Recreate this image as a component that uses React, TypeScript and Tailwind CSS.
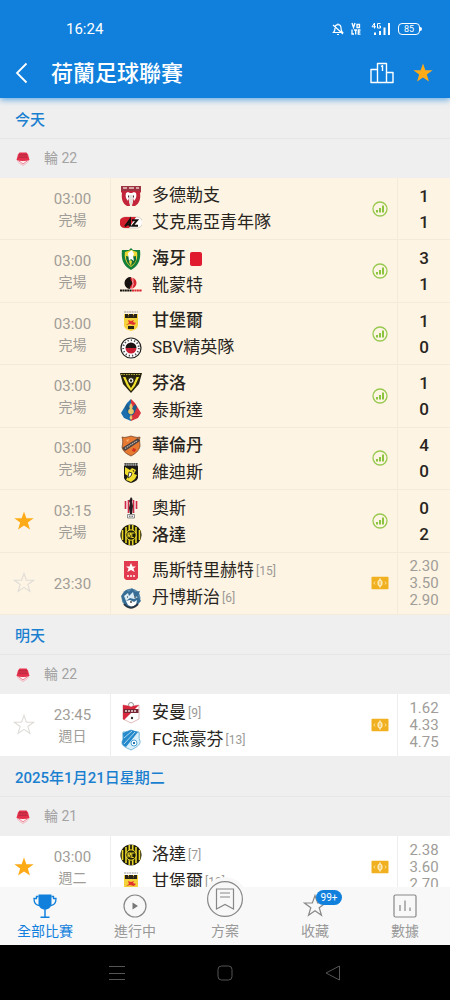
import { FunctionComponent, ReactNode, useState } from "react";
import clsx from "clsx";

type ITeam = {
  name: string;
  crest: string;
  score?: number;
  rank?: number;
  winner?: boolean;
  redCard?: boolean;
};

type IMatch = {
  id: number;
  time: string;
  status?: string;
  home: ITeam;
  away: ITeam;
  odds?: string[];
  starred?: boolean;
};

type IDay = {
  title: string;
  round: number;
  today?: boolean;
  matches: IMatch[];
};

const days: IDay[] = [
  {
    title: "今天",
    round: 22,
    today: true,
    matches: [
      {
        id: 1,
        time: "03:00",
        status: "完場",
        home: { name: "多德勒支", crest: "dordrecht", score: 1 },
        away: { name: "艾克馬亞青年隊", crest: "az", score: 1 },
      },
      {
        id: 2,
        time: "03:00",
        status: "完場",
        home: { name: "海牙", crest: "denhaag", score: 3, winner: true, redCard: true },
        away: { name: "靴蒙特", crest: "helmond", score: 1 },
      },
      {
        id: 3,
        time: "03:00",
        status: "完場",
        home: { name: "甘堡爾", crest: "cambuur", score: 1, winner: true },
        away: { name: "SBV精英隊", crest: "excelsior", score: 0 },
      },
      {
        id: 4,
        time: "03:00",
        status: "完場",
        home: { name: "芬洛", crest: "venlo", score: 1, winner: true },
        away: { name: "泰斯達", crest: "telstar", score: 0 },
      },
      {
        id: 5,
        time: "03:00",
        status: "完場",
        home: { name: "華倫丹", crest: "volendam", score: 4, winner: true },
        away: { name: "維迪斯", crest: "vitesse", score: 0 },
      },
      {
        id: 6,
        time: "03:15",
        status: "完場",
        starred: true,
        home: { name: "奧斯", crest: "oss", score: 0 },
        away: { name: "洛達", crest: "roda", score: 2, winner: true },
      },
      {
        id: 7,
        time: "23:30",
        starred: false,
        home: { name: "馬斯特里赫特", crest: "mvv", rank: 15 },
        away: { name: "丹博斯治", crest: "denbosch", rank: 6 },
        odds: ["2.30", "3.50", "2.90"],
      },
    ],
  },
  {
    title: "明天",
    round: 22,
    matches: [
      {
        id: 8,
        time: "23:45",
        status: "週日",
        starred: false,
        home: { name: "安曼", crest: "emmen", rank: 9 },
        away: { name: "FC燕豪芬", crest: "eindhoven", rank: 13 },
        odds: ["1.62", "4.33", "4.75"],
      },
    ],
  },
  {
    title: "2025年1月21日星期二",
    round: 21,
    matches: [
      {
        id: 9,
        time: "03:00",
        status: "週二",
        starred: true,
        home: { name: "洛達", crest: "roda", rank: 7 },
        away: { name: "甘堡爾", crest: "cambuur", rank: 10 },
        odds: ["2.38", "3.60", "2.70"],
      },
    ],
  },
];

const STAR = "M12 1.5l2.600 7.400 7.900.1-6.300 4.700 2.300 7.600L12 16.800l-6.500 4.500 2.300-7.600L1.500 9l7.900-.1z";

const crests: Record<string, ReactNode> = {
  dordrecht: (
    <>
      <path d="M1 1h20v6l-1 1c1 6-1 11-5 13h-3l1-5H9l1 5H7C3 19 1 14 2 8L1 7z" fill="#c3263a" />
      <path d="M1 1h20v5H1z" fill="#9d3442" />
      <path d="M3 3h4M9 3h5M16 3h3" stroke="#e8c9c4" strokeWidth="1.6" />
      <path d="M6 8c-1 3 0 6 2 8l1-3 2 1 2-1 1 3c2-2 3-5 2-8l-2-1-2 1h-2L8 7z" fill="#fff" />
      <path d="M9 10h4v7l-2 4-2-4z" fill="#e6e1dd" />
      <path d="M8.500 10.500v2M13.500 10.500v2" stroke="#4b3035" strokeWidth="1" />
    </>
  ),
  az: (
    <>
      <path d="M5 5h12a5 5 0 0 1 0 11H5A5 5 0 0 1 5 5z" fill="#fff" stroke="#cfc8bd" strokeWidth=".8" />
      <path d="M5 5h11L9 16H5A5 5 0 0 1 5 5z" fill="#d3202e" />
      <path d="M5 14.500L10 7.500v7M7 12.500h3M12 8.300h5L12.500 13.700h5.500" stroke="#15110f" strokeWidth="2" fill="none" />
    </>
  ),
  denhaag: (
    <>
      <path d="M11 0l2 2h7c1 9-1 16-9 20C3 18 1 11 2 2h7z" fill="#13803b" />
      <path d="M5 4l6-2 6 2c1 7-1 11-6 15C6 15 4 11 5 4z" fill="#ecd734" />
      <path d="M6 8c3 1 7 1 10 0v4c-1 3-3 4-5 6-3-2-5-5-5-10z" fill="#106b34" />
      <path d="M8 5l4-3 2 4-1 2 1 5-3-2-2 2z" fill="#fff" />
      <path d="M10 12l2 1-1 5-2-4z" fill="#ecd734" />
    </>
  ),
  helmond: (
    <>
      <circle cx="11" cy="8" r="5.500" fill="#d9242e" />
      <path d="M11 2a6 6 0 0 0-1 12c-1-3 3-4 2-7-1-2-2-2-1-5z" fill="#17120f" />
      <path d="M12 3c2 2 0 4 1 5s-1 3-1 5" stroke="#fff" strokeWidth=".7" fill="none" />
      <path d="M0 15.500h12" stroke="#17120f" strokeWidth="2" strokeDasharray="2 .4" />
      <path d="M12 15.500h10" stroke="#d9242e" strokeWidth="2" strokeDasharray="2 .4" />
    </>
  ),
  cambuur: (
    <>
      <path d="M4 4h14v11c0 3-3 5-7 6-4-1-7-3-7-6z" fill="#f4d23b" />
      <path d="M4 2h14" stroke="#999" strokeWidth="1.200" strokeDasharray="2 .6" />
      <path d="M5 4h3v3h1V4h4v3h1V4h3v4H5z" fill="#2a2418" />
      <path d="M6 6h10" stroke="#2a2418" strokeWidth="1.500" />
      <path d="M8 10l3 1 3-1-1 2 3 1-2 2-4-1-4 1 3-2z" fill="#e2342c" />
      <path d="M8 16h6v3H8z" fill="#2a2418" />
    </>
  ),
  excelsior: (
    <>
      <circle cx="11" cy="11" r="10" fill="#fff" stroke="#222" strokeWidth="1.200" />
      <circle cx="11" cy="11" r="7.800" fill="none" stroke="#555" strokeWidth="1.800" strokeDasharray="1.300 2" />
      <path d="M5.500 11a5.500 5.500 0 0 1 11 0z" fill="#1c1414" />
      <path d="M5.500 11a5.500 5.500 0 0 0 11 0z" fill="#c81e34" />
    </>
  ),
  venlo: (
    <>
      <path d="M0 1h22l-3 11-8 9-8-9z" fill="#26230f" />
      <path d="M1 2.500h20" stroke="#b8ad3a" strokeWidth="1" strokeDasharray="1.500 1" />
      <path d="M3 5l4 9 4 5 4-5 4-9h-2.500l-3 7-2.500 4-2.500-4-3-7z" fill="#f0df2e" />
      <circle cx="11" cy="8.500" r="2.800" fill="#fff" stroke="#26230f" strokeWidth=".8" />
      <path d="M10.200 7.500h1.600l.6 1.500-1.400 1-1.400-1z" fill="#26230f" />
    </>
  ),
  telstar: (
    <>
      <path d="M11 0L7 4 1 14l3 5 7 3z" fill="#1b6fae" />
      <path d="M11 0l4 4 6 10-3 5-7 3z" fill="#d8333c" />
      <path d="M7 5l4 5 4-5 2 3-3 7-3 2-3-2-3-7z" fill="#1c5c8c" />
      <path d="M11 2l4 3-4 5z" fill="#d8333c" />
      <path d="M11 4c2 3 2 4 1 6h-2c-1-2-1-3 1-6zM11 15l1.500 4-1.500 2-1.500-2z" fill="#e9c86c" />
      <circle cx="11" cy="12.500" r="2.800" fill="#e9c86c" />
    </>
  ),
  volendam: (
    <>
      <path d="M2 2c3 1 5 0 9-1 4 1 6 2 9 1-1 3 0 6 0 9-1 5-5 8-9 10-4-2-8-4-9-9 1-4 1-7 0-10z" fill="#e77a30" stroke="#74482d" strokeWidth=".8" />
      <path d="M2 13L18 3l2 3L5 16z" fill="#484244" />
      <path d="M5 13.500L17.500 5.500" stroke="#c9b9a9" strokeWidth="1.200" strokeDasharray="1.400 .7" />
      <path d="M13 13l3 1-1 3-3-1z" fill="#d22d1d" />
      <path d="M6 5l3-1-1 3z" fill="#f6b273" />
    </>
  ),
  vitesse: (
    <>
      <path d="M4 1h14v15c-1 3-4 4-7 5-3-1-6-2-7-5z" fill="#1b1a17" />
      <path d="M4 2.500h14" stroke="#aaa" strokeWidth="2.400" strokeDasharray="1.500 .6" />
      <path d="M5 5l5 3 2-2 4 2-2 4 3 1-2 4-4 3-5-2 2-4-3-2z" fill="#f1dd2c" />
      <path d="M9 10l3 1-1 3-3 2zM13 8l1 2" fill="#fff" stroke="#1b1a17" strokeWidth=".8" />
    </>
  ),
  oss: (
    <>
      <path d="M5 4c3-2 9-2 12 0 2 5 0 11-6 13C5 15 3 9 5 4z" fill="#fff" />
      <path d="M5.500 4v8M8.500 3v13M13.500 3v13M16.500 4v8" stroke="#cf2c44" strokeWidth="1.700" />
      <path d="M11 0l1.500 2-.5 3 1 4-1 8h-2l-1-6 1-5-1-2z" fill="#241c1e" />
      <path d="M7.500 17.500h7v3.500h-7z" fill="#eee" stroke="#777" strokeWidth=".8" />
      <path d="M9 19.200h4" stroke="#555" strokeDasharray="1 .5" />
    </>
  ),
  roda: (
    <>
      <circle cx="11" cy="11" r="10.600" fill="#1d1b0c" />
      <path d="M2.500 6v10M6 3v16M9.300 1v20M12.700 1v20M16 3v16M19.500 6v10" stroke="#e9d829" strokeWidth="1.600" />
      <circle cx="11" cy="11" r="5.200" fill="#1d1b0c" stroke="#e9d829" strokeWidth="1" />
      <path d="M8 13.500V9h2.500v2H8.500l2 2.500M14.500 9h-2.700v4.500h2" stroke="#e9d829" strokeWidth="1.100" fill="none" />
    </>
  ),
  mvv: (
    <>
      <path d="M4 1h14v17l-2 2H6l-2-2z" fill="#e23b50" />
      <path d="M11 3l1.500 3.500H16l-2.600 2 1.300 3.500-3.700-2-3.700 2 1.300-3.500-2.600-2h3.500z" fill="#fff" />
      <path d="M7 16h8" stroke="#f7c5c9" strokeWidth="2" strokeDasharray="2 1" />
    </>
  ),
  denbosch: (
    <>
      <circle cx="11" cy="11" r="9.500" fill="#5589ad" />
      <path d="M1 9l5-6 3 2 3-4 3 4 5-1-2 5 3 5-6 6H8l-4-4z" fill="#376c94" />
      <path d="M4 9l4-3 1 3 4-4 1 4 4 1-4 2-4-1-4 3z" fill="#d9ecf6" />
      <path d="M6 14l4-1 4 2 3-2-1 5-4 2-4-2z" fill="#fff" />
      <path d="M4 17c4 5 9 5 14 0" stroke="#273542" strokeWidth="1.800" fill="none" />
      <path d="M7 10h1M14 10h2M11 14v2" stroke="#222" strokeWidth="1.200" />
    </>
  ),
  emmen: (
    <>
      <circle cx="11" cy="3" r="2.500" fill="#fff" stroke="#777" strokeWidth=".8" />
      <path d="M3 3l6 1 2 1 2-1 6-1v14l-8 4-8-4z" fill="#fff" stroke="#d8a9a9" strokeWidth=".8" />
      <path d="M3 3l6 1 2 1 2-1 6-1L4 18l-1-1z" fill="#d8283e" />
      <path d="M3.500 7h15v4h-15z" fill="#742836" />
      <path d="M5 9h12" stroke="#f0dcdc" strokeWidth="1.400" strokeDasharray="2 1" />
      <circle cx="12" cy="16" r="1.200" fill="#333" />
    </>
  ),
  eindhoven: (
    <>
      <path d="M3 3c4 0 5-1 8-2 3 1 5 2 8 2 1 3-1 5 1 9 1 4-5 7-9 9-4-2-10-4-9-8 2-4 0-6 1-10z" fill="#d9effa" stroke="#5aa7d2" strokeWidth=".8" />
      <path d="M3 4l8-3 7 2L6 18c-3-1-4-3-4-5 2-4 1-6 1-9z" fill="#258acb" />
      <path d="M4 9l8-7M4 15L15 3" stroke="#cfe8f6" strokeWidth=".8" />
      <circle cx="14" cy="14" r="3" fill="#fff" stroke="#3b98d0" strokeWidth=".9" />
      <path d="M13 13h2v2h-2z" fill="#2579b3" />
    </>
  ),
};

const Crest: FunctionComponent<{ name: string }> = ({ name }) => (
  <svg viewBox="0 0 22 22" className="size-[22px] shrink-0" aria-hidden="true">
    {crests[name]}
  </svg>
);

const LeagueIcon = () => (
  <svg viewBox="0 0 14 14" className="size-[14px]" aria-hidden="true">
    <path d="M1.500 8.500c.5 2.500 3.500 3.500 5.500 5 2-1.500 5-2.500 5.500-5z" fill="#fdeef0" stroke="#eba1aa" strokeWidth=".7" />
    <path d="M3 9l4 3 4-3" stroke="#e0506a" strokeWidth=".7" fill="none" />
    <path d="M3.500.5h7L12 2.500 13.500 8c-4 1.200-9 1.200-13 0L2 2.500z" fill="#e4304a" />
    <path d="M3 2.800h8M2.500 5.200h9" stroke="#a52a3f" strokeWidth=".9" />
  </svg>
);

const StatsIcon = () => (
  <svg viewBox="0 0 16 16" className="size-4" aria-hidden="true">
    <circle cx="8" cy="8" r="7" fill="none" stroke="#97c950" strokeWidth="1.300" />
    <path d="M5 11.500V9M8 11.500V7M11 11.500V4.500" stroke="#8bc53f" strokeWidth="2" />
  </svg>
);

const TicketIcon = () => (
  <svg viewBox="0 0 18 14" className="h-[14px] w-[18px]" aria-hidden="true">
    <rect x=".5" y=".8" width="17" height="12.400" rx=".8" fill="#f1b01f" />
    <path d="M9 2.500v9" stroke="#fff" strokeWidth="1.200" />
    <ellipse cx="9" cy="7" rx="2.600" ry="3.300" fill="#fdeab9" />
    <path d="M9 5v4" stroke="#f1b01f" strokeWidth="1" />
    <path d="M4 5.500L2.800 7 4 8.500M14 5.500L15.200 7 14 8.500" stroke="#fbe3a6" strokeWidth="1" fill="none" />
  </svg>
);

const StatusBar = () => (
  <div className="flex h-12 items-center pt-[10px] pr-[28px] pl-[66px] text-[15px]">
    <span>16:24</span>
    <div className="ml-auto flex items-center">
      <svg viewBox="0 0 12 14" className="mr-[7px] h-[14px] w-3" fill="none" stroke="#fff" strokeWidth="1.200" aria-hidden="true">
        <path d="M6 1.500v1M1.500 10.500C3 9 3 7.500 3 6c0-2 1.300-3.300 3-3.300S9 4 9 6c0 1.500 0 3 1.500 4.500zM5 12.500h2M1 3l10 9" />
      </svg>
      <svg viewBox="0 0 10 14" className="mr-[10px] h-[14px] w-[10px]" fill="none" stroke="#fff" strokeWidth="1.300" aria-hidden="true">
        <path d="M1 1l1.500 4.500L4 1M6 2.500h2.500v3H6zM1 7.500V12h2M3 8h3M4.700 8v4.500M9.500 8H7.300v4.200h2.200M7.300 10h2" />
      </svg>
      <svg viewBox="0 0 20 14" className="mr-[7px] h-[14px] w-5" fill="none" stroke="#fff" aria-hidden="true">
        <path d="M3.500 6.500V1L1 4.800h4M9.500 1.500h-3v4.500h3V4H8" />
        <path d="M4 13v-2.500M9 13V9M13.500 13V5.500M18 13V1" strokeWidth="2" />
      </svg>
      <span className="flex h-3 w-[22px] items-center justify-center rounded-[4px] border border-white text-[9px] leading-none">
        85
      </span>
      <span className="h-1 w-[2px] rounded-r bg-white" />
    </div>
  </div>
);

const Header: FunctionComponent = () => (
  <header className="relative z-10 shrink-0 bg-[#1080dc] text-white shadow-[0_2px_6px_#1080dc99]">
    <StatusBar />
    <div className="flex h-[50px] items-center pr-4 pl-[15px]">
      <button type="button" aria-label="返回">
        <svg viewBox="0 0 13 22" className="h-[22px] w-[13px]" fill="none" stroke="#fff" strokeWidth="1.800" aria-hidden="true">
          <path d="M11.500 1.500L2 11l9.500 9.500" />
        </svg>
      </button>
      <h1 className="ml-[23px] text-[22px] font-medium">荷蘭足球聯賽</h1>
      <button type="button" aria-label="排名" className="ml-auto">
        <svg viewBox="0 0 24 22" className="h-[22px] w-6" fill="none" stroke="#fff" strokeWidth="1.400" aria-hidden="true">
          <path d="M7.500 20.500V1.500h9v19M7.500 7.500H1v13h22V10.500h-6.500M11 4.500l1.500-.8V9" strokeLinejoin="round" />
        </svg>
      </button>
      <button type="button" aria-label="收藏聯賽" className="ml-[18px]">
        <svg viewBox="0 0 24 24" className="size-[22px]" aria-hidden="true">
          <path d={STAR} fill="#ffaa17" />
        </svg>
      </button>
    </div>
  </header>
);

const TeamRow: FunctionComponent<{ team: ITeam }> = ({ team }) => (
  <div className="flex h-[27px] items-center">
    <Crest name={team.crest} />
    <span className={clsx("ml-[10px] text-[17px] whitespace-nowrap text-[#282521]", team.winner && "font-medium")}>
      {team.name}
    </span>
    {team.rank && <span className="ml-[2px] text-[12px] text-[#9b9996]">[{team.rank}]</span>}
    {team.redCard && <span className="ml-1 h-[14px] w-3 rounded-[2px] bg-[#e01b2f]" />}
  </div>
);

const MatchRow: FunctionComponent<{ match: IMatch; today?: boolean }> = ({ match, today }) => {
  const [starred, setStarred] = useState(match.starred);
  const line = today ? "border-[#f3eadb]" : "border-[#eeeeee]";

  return (
    <li className={clsx("flex min-h-[62px] border-b", line, today ? "bg-[#fef4e3]" : "bg-white")}>
      <div className="flex w-12 shrink-0 items-center justify-center">
        {match.starred !== undefined && (
          <button type="button" aria-label="收藏比賽" aria-pressed={starred} onClick={() => setStarred(!starred)}>
            <svg viewBox="0 0 24 24" className="size-[22px]" aria-hidden="true">
              <path d={STAR} fill={starred ? "#ffaa17" : "none"} stroke={starred ? "none" : "#dfdcd8"} strokeWidth="1.200" />
            </svg>
          </button>
        )}
      </div>
      <div className="flex w-[49px] shrink-0 flex-col items-center justify-center pt-[2px] text-[#a09d98]">
        <span className="text-[15px] leading-[21px]">{match.time}</span>
        {match.status && <span className="text-[14px] leading-[21px]">{match.status}</span>}
      </div>
      <div className={clsx("ml-[13px] flex min-w-0 flex-1 flex-col justify-center border-l pt-[2px] pl-[9px]", line)}>
        <TeamRow team={match.home} />
        <TeamRow team={match.away} />
      </div>
      <div className="flex w-[35px] shrink-0 items-center justify-center">
        {match.odds ? <TicketIcon /> : <StatsIcon />}
      </div>
      <div className={clsx("flex w-[53px] shrink-0 flex-col items-center justify-center border-l", line)}>
        {match.odds ? (
          match.odds.map((odd) => (
            <span key={odd} className="text-[15px] leading-[17px] text-[#a09d98]">
              {odd}
            </span>
          ))
        ) : (
          <>
            <span className="text-[17px] leading-[26px] font-medium text-[#282521]">{match.home.score}</span>
            <span className="text-[17px] leading-[26px] font-medium text-[#282521]">{match.away.score}</span>
          </>
        )}
      </div>
    </li>
  );
};

const DaySection: FunctionComponent<{ day: IDay }> = ({ day }) => (
  <section>
    <h2 className="flex h-10 items-center border-b border-[#e6e6e6] pt-1 pl-[15px] text-[15px] font-medium text-[#1b7fd0]">
      {day.title}
    </h2>
    <div className="flex h-[39px] items-center gap-[14px] pl-4 text-[14px] text-[#a3a3a3]">
      <LeagueIcon />
      <span>輪 {day.round}</span>
    </div>
    <ul className={clsx("grid auto-rows-fr", day.today ? "min-h-[437px]" : "min-h-[63px]")}>
      {day.matches.map((match) => (
        <MatchRow key={match.id} match={match} today={day.today} />
      ))}
    </ul>
  </section>
);

const tabs: { label: string; icon: ReactNode; active?: boolean; raised?: boolean; badge?: string }[] = [
  {
    label: "全部比賽",
    active: true,
    icon: (
      <svg viewBox="0 0 24 24" className="size-6" aria-hidden="true">
        <path d="M5.500.5h13v8.500c0 4-2.500 6.500-6.500 6.500S5.500 13 5.500 9z" fill="#1080dc" />
        <path d="M5.500 2.500h-2v2H1c0 4 1.500 6.500 5 7M18.500 2.500h2v2H23c0 4-1.500 6.500-5 7" fill="none" stroke="#1080dc" strokeWidth="1.300" />
        <path d="M12 15v8M7.500 23.200h9" stroke="#1080dc" strokeWidth="1.500" />
      </svg>
    ),
  },
  {
    label: "進行中",
    icon: (
      <svg viewBox="0 0 24 24" className="size-6" aria-hidden="true">
        <circle cx="12" cy="12" r="11" fill="none" stroke="#888" strokeWidth="1.200" />
        <path d="M9.500 8.500v7l5.500-3.500z" fill="#777" />
      </svg>
    ),
  },
  {
    label: "方案",
    raised: true,
    icon: (
      <svg viewBox="0 0 44 44" className="size-11" fill="none" stroke="#888" strokeWidth="1.200" aria-hidden="true">
        <circle cx="22" cy="22" r="22" fill="#f8f8f8" stroke="none" />
        <circle cx="22" cy="22" r="17.400" />
        <path d="M13.500 12h17v20L22 27.500 13.500 32zM17 16h10M17 20h10" />
      </svg>
    ),
  },
  {
    label: "收藏",
    badge: "99+",
    icon: (
      <svg viewBox="0 0 24 24" className="size-6" aria-hidden="true">
        <path d={STAR} fill="none" stroke="#888" strokeWidth="1.200" />
      </svg>
    ),
  },
  {
    label: "數據",
    icon: (
      <svg viewBox="0 0 24 24" className="size-6" fill="none" stroke="#888" strokeWidth="1.200" aria-hidden="true">
        <rect x="1" y="1" width="22" height="22" rx="1.500" />
        <path d="M7 17v-6M12 17V6.500M17 17v-3.500" />
      </svg>
    ),
  },
];

const TabBar: FunctionComponent = () => (
  <nav className="relative z-10 grid h-[58px] shrink-0 grid-cols-5 grid-rows-1 bg-[#f8f8f8]">
    {tabs.map(({ label, icon, active, raised, badge }) => (
      <button
        key={label}
        type="button"
        className={clsx("flex flex-col items-center justify-end text-[14px]", active ? "text-[#1080dc]" : "text-[#999999]")}
      >
        <span className={clsx("relative", !raised && "mb-[3px]")}>
          {icon}
          {badge && (
            <span className="absolute -top-1 left-[13px] flex h-[15px] w-[26px] items-center justify-center rounded-full bg-[#1080dc] text-[10px] text-white">
              {badge}
            </span>
          )}
        </span>
        <span className="mb-1 leading-[20px]">{label}</span>
      </button>
    ))}
  </nav>
);

const SystemBar: FunctionComponent = () => (
  <div className="flex h-[55px] shrink-0 items-center justify-center gap-[92px] bg-black">
    <button type="button" aria-label="最近">
      <svg viewBox="0 0 16 16" className="size-4" stroke="#555" aria-hidden="true">
        <path d="M0 1.500h16M0 8.500h16M0 14.500h16" />
      </svg>
    </button>
    <button type="button" aria-label="主畫面">
      <svg viewBox="0 0 16 16" className="size-4" fill="none" stroke="#555" aria-hidden="true">
        <rect x="1" y="1" width="14" height="14" rx="3.500" />
      </svg>
    </button>
    <button type="button" aria-label="上一頁">
      <svg viewBox="0 0 16 16" className="size-4" fill="none" stroke="#555" strokeLinejoin="round" aria-hidden="true">
        <path d="M14.500 1v14L1 8z" />
      </svg>
    </button>
  </div>
);

const App: FunctionComponent = () => (
  <div className="flex h-screen flex-col bg-[#efefef] font-[Roboto,'Noto_Sans_CJK_TC',sans-serif]">
    <Header />
    <main className="min-h-0 flex-1 overflow-hidden pt-px">
      {days.map((day) => (
        <DaySection key={day.title} day={day} />
      ))}
    </main>
    <TabBar />
    <SystemBar />
  </div>
);

export default App;
